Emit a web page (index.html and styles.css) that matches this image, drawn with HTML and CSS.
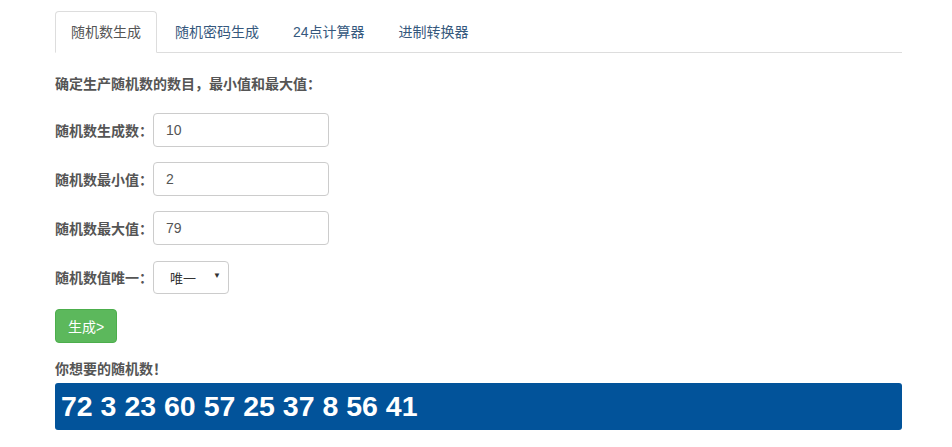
FILE: index.html
```html
<!DOCTYPE html>
<html lang="zh-CN">
<head>
    <meta charset="UTF-8">
    <title>随机数生成</title>
    <link rel="stylesheet" href="styles.css">
</head>
<body>
    <div class="container">
        <ul class="nav-tabs">
            <li class="active"><a href="#">随机数生成</a></li>
            <li><a href="#">随机密码生成</a></li>
            <li><a href="#">24点计算器</a></li>
            <li><a href="#">进制转换器</a></li>
        </ul>

        <p class="intro">确定生产随机数的数目，最小值和最大值：</p>

        <div class="form-row">
            <label>随机数生成数：</label>
            <input type="text" class="field" value="10">
        </div>
        <div class="form-row">
            <label>随机数最小值：</label>
            <input type="text" class="field" value="2">
        </div>
        <div class="form-row">
            <label>随机数最大值：</label>
            <input type="text" class="field" value="79">
        </div>
        <div class="form-row">
            <label>随机数值唯一：</label>
            <div class="select">
                <span>唯一</span>
                <span class="caret">&#9660;</span>
            </div>
        </div>

        <button class="btn-success">生成&gt;</button>

        <p class="result-title">你想要的随机数！</p>
        <div class="result">72 3 23 60 57 25 37 8 56 41</div>
    </div>
</body>
</html>
```

FILE: styles.css
```css
body {
    margin: 0;
    background: #fff;
    color: #555;
    font-family: "Helvetica Neue", "Liberation Sans", "Noto Sans CJK SC", sans-serif;
    font-size: 14px;
}

.container {
    width: 847px;
    margin-left: 55px;
    padding-top: 11px;
}

.nav-tabs {
    list-style: none;
    margin: 0;
    padding: 0;
    display: flex;
    border-bottom: 1px solid #ddd;
}

.nav-tabs li {
    margin-bottom: -1px;
    margin-right: 2px;
}

.nav-tabs a {
    display: block;
    padding: 10px 15px;
    line-height: 20px;
    border: 1px solid transparent;
    border-radius: 4px 4px 0 0;
    color: #35587d;
    text-decoration: none;
}

.nav-tabs .active a {
    color: #555;
    border-color: #ddd;
    border-bottom-color: #fff;
    background: #fff;
}

.intro {
    margin: 22px 0 20px;
    font-size: 14px;
    font-weight: bold;
    line-height: 18px;
}

.form-row {
    display: flex;
    align-items: center;
    margin-bottom: 15px;
}

.form-row label {
    width: 98px;
    font-size: 14px;
    font-weight: bold;
}

.field {
    box-sizing: border-box;
    width: 176px;
    height: 34px;
    padding: 6px 12px;
    border: 1px solid #ccc;
    border-radius: 4px;
    font-family: "Liberation Sans", sans-serif;
    font-size: 14px;
    color: #555;
}

.select {
    box-sizing: border-box;
    width: 76px;
    height: 33px;
    margin-top: 1px;
    border: 1px solid #ccc;
    border-radius: 4px;
    display: flex;
    align-items: center;
    justify-content: space-between;
    padding: 0 7px 0 16px;
    font-size: 13px;
    color: #333;
}

.select .caret {
    font-size: 8px;
    margin-top: -4px;
}

.btn-success {
    display: block;
    margin-top: 0;
    height: 34px;
    padding: 0 12px;
    border: 1px solid #4cae4c;
    border-radius: 4px;
    background: #5cb85c;
    color: #fff;
    font-family: "Liberation Sans", "Noto Sans CJK SC", sans-serif;
    font-size: 14px;
}

.result-title {
    margin: 17px 0 5px;
    font-size: 14px;
    font-weight: bold;
    line-height: 18px;
}

.result {
    height: 47px;
    box-sizing: border-box;
    padding-left: 6px;
    background: #02539a;
    border-radius: 3px;
    color: #fff;
    font-family: "Liberation Sans", Arial, sans-serif;
    font-weight: bold;
    font-size: 28.5px;
    line-height: 47px;
}
```
